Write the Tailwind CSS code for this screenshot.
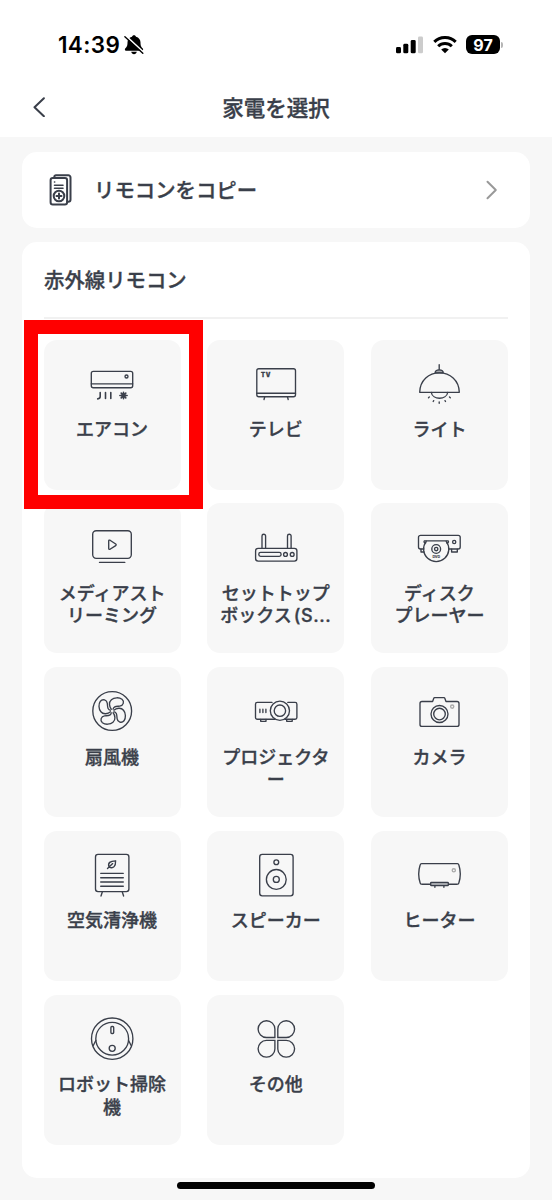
<!DOCTYPE html>
<html lang="ja">
<head>
<meta charset="utf-8">
<meta name="viewport" content="width=device-width, initial-scale=1">
<title>家電を選択</title>
<script src="https://cdn.jsdelivr.net/npm/@tailwindcss/browser@4"></script>
</head>
<body class="bg-[#f7f7f7]">
<div class="relative w-[552px] h-[1200px] overflow-hidden bg-[#f7f7f7] text-[#3a3f4a] font-['Inter','Noto_Sans_CJK_JP',sans-serif] font-medium">

  <header class="h-[137px] bg-white">
    <!-- status bar -->
    <div class="flex h-[76px] items-center justify-between pt-[13px] pl-[58px] pr-[49px] text-black">
      <div class="flex items-center gap-[4px]">
        <span class="w-[62px] text-[22.5px] leading-6 font-semibold tracking-[0.35px] whitespace-nowrap">14:39</span>
        <svg class="size-5" viewBox="0 0 20 20" fill="none">
          <path d="M10 .3c1.100 0 1.800.7 2 1.500 2.900.8 4.500 3.100 4.500 5.700 0 3.800.9 4.500 2.300 6.100.7.900.3 2.100-.8 2.100H2c-1.100 0-1.500-1.200-.8-2.100 1.400-1.600 2.300-2.300 2.300-6.100C3.500 4.900 5.100 2.600 8 1.800 8.200 1 8.900.3 10 .3Z" fill="#000"/>
          <path d="M7.200 16.800h5.600c-.3 1.500-1.400 2.400-2.800 2.400s-2.500-.9-2.800-2.400Z" fill="#000"/>
          <path d="M1.600.7 19.600 17.300" stroke="#fff" stroke-width="1.800"/>
          <path d="M.9 1.700 18.800 18.300" stroke="#000" stroke-width="1.400" stroke-linecap="round"/>
        </svg>
      </div>
      <div class="flex items-center">
        <svg class="w-[28px] h-[18px]" viewBox="0 0 28 18">
          <rect x="0" y="11" width="5" height="6.300" rx="1.400"/><rect x="7.300" y="7.800" width="5" height="9.500" rx="1.400"/><rect x="14.700" y="4" width="5" height="13.300" rx="1.400"/><rect x="22" y=".5" width="5" height="16.800" rx="1.400" fill="#ccc"/>
        </svg>
        <svg class="ml-[9px] w-6 h-[18px]" viewBox="0 0 24 18" fill="none" stroke="#000" stroke-width="3">
          <path d="M1.300 5.900a15.200 15.200 0 0 1 21.400 0"/><path d="M5.200 10.200a9.700 9.700 0 0 1 13.600 0"/><path d="M12 17.300 8.200 13.500a5.400 5.400 0 0 1 7.600 0Z" fill="#000" stroke="none"/>
        </svg>
        <span class="ml-[9px] flex h-[19px] w-[34px] items-center justify-center rounded-[6px] bg-black text-[16px] font-bold leading-none text-white">97</span>
        <span class="ml-[1px] h-[6px] w-[2px] rounded-r-full bg-[#b5b5b5]"></span>
      </div>
    </div>
    <!-- title bar -->
    <div class="grid h-[61px] grid-cols-[72px_1fr_72px] items-center">
      <svg class="ml-[32px] h-5 w-3.5" viewBox="0 0 14 20" fill="none" stroke="#3a3f4a" stroke-width="2" stroke-linecap="round" stroke-linejoin="round"><path d="M11.900 1.200 2.500 10.300l9.400 9"/></svg>
      <h1 class="pt-[2px] text-center text-[21.500px] leading-8 [-webkit-text-stroke:0.35px_#3a3f4a]">家電を選択</h1>
    </div>
  </header>

  <main class="px-[22px] pt-[15px]">
    <a class="flex h-[76px] items-center rounded-[15px] bg-white pl-[27px] pr-[32px]">
      <svg class="h-8 w-6" viewBox="0 0 24 32" fill="none" stroke="#3a3f4a" stroke-width="2" stroke-linecap="round" stroke-linejoin="round">
        <path d="M5.300 3.500V3A1.700 1.700 0 0 1 7 1.300h12.300A2.200 2.200 0 0 1 21.500 3.500v22a2.200 2.200 0 0 1-2.200 2.200h-1"/>
        <rect x="1.600" y="4" width="16.500" height="26.500" rx="2.200"/>
        <path d="M5.500 8h.2M5.500 11.300h8.500M5.500 14.300h8.500" stroke-width="1.600"/>
        <circle cx="10" cy="22" r="5.300"/><path d="M10 19.500v5M7.500 22h5"/>
      </svg>
      <span class="ml-[21px] pt-[2px] text-[20.400px] leading-8 [-webkit-text-stroke:0.35px_#3a3f4a]">リモコンをコピー</span>
      <svg class="ml-auto h-5 w-3" viewBox="0 0 12 20" fill="none" stroke="#999" stroke-width="2" stroke-linecap="round" stroke-linejoin="round"><path d="m1.500 1.800 8.300 8.200-8.300 8.200"/></svg>
    </a>

    <section class="mt-[14px] h-[936px] rounded-[15px] bg-white px-[22px]">
      <h2 class="flex h-[77px] items-center border-b-2 border-[#f1f1f1] pt-[3px] text-[20.400px] leading-8 [-webkit-text-stroke:0.35px_#3a3f4a]">赤外線リモコン</h2>
      <ul class="-ml-[0.400px] mt-[20.500px] grid grid-cols-[137px_137px_137px] justify-between gap-y-[13.800px] text-center text-[18px] leading-[22.600px] [&>li]:flex [&>li]:h-[150px] [&>li]:flex-col [&>li]:items-center [&>li]:rounded-[13px] [&>li]:bg-[#f7f7f7] [&>li]:pt-5 [&_svg]:mr-[0.600px] [&_svg]:size-12 [&_svg]:shrink-0 [&_svg]:fill-none [&_svg]:stroke-[#3a3f4a] [&_svg]:stroke-[1.350px] [&_p]:mt-[11.500px] [&_p]:whitespace-nowrap [&_p]:[-webkit-text-stroke:0.35px_#3a3f4a]">
        <li>
          <svg viewBox="0 0 48 48" stroke-linecap="round" stroke-linejoin="round"><rect x="3.300" y="11.300" width="41.400" height="16.400" rx="2"/><path d="M3.300 23.800h41.400"/><circle cx="38.500" cy="16.500" r="1.500"/><path class="stroke-[1.600px]" d="M12.200 32.600v4q0 2-2.500 2.300M17.500 32.600v5.800M22.800 32.600v5.800M35.500 32.300v6.400M31.900 35.500h7.200M33.200 33.100l4.600 4.800M37.800 33.100l-4.600 4.800"/></svg>
          <p>エアコン</p>
        </li>
        <li>
          <svg viewBox="0 0 48 48" stroke-linecap="round"><rect x="4.800" y="8.700" width="38.700" height="28" rx="2"/><path d="M4.800 33.200h38.700M12.700 37l-.7 2.500M35.500 37l.7 2.500"/><text x="9" y="16.900" font-size="5.800" font-weight="900" letter-spacing=".8" fill="#3a3f4a" stroke-width=".3" class="stroke-[0.300px]">TV</text></svg>
          <p>テレビ</p>
        </li>
        <li>
          <svg viewBox="0 0 48 48" stroke-linecap="round" stroke-linejoin="round"><path d="M24.200 4.700v5.100"/><path d="M20.200 12.800c0-4 8-4 8 0Z" fill="#a5a8ad"/><path d="M4.700 32.300C5 20 14 12.900 24.400 12.900S44 20 44.300 32.300Z"/><path d="M16.300 32.500c1.200 7.600 15.200 7.600 16.400 0"/><path d="m14.300 37-.8.700M18.700 40.600l-.5.900M24.200 42v1.200M30 40.600l.5.900M34.500 37l.8.700"/></svg>
          <p>ライト</p>
        </li>
        <li>
          <svg viewBox="0 0 48 48" stroke-linecap="round" stroke-linejoin="round"><rect x="4.700" y="7.700" width="38.600" height="27.600" rx="3.500"/><path d="M11.500 39.400h25.300M20.700 18v7.500c0 .8.700 1.100 1.300.8l5.700-3.700c.6-.4.600-1.200 0-1.600L22 17.200c-.6-.3-1.300 0-1.300.8Z"/></svg>
          <p>メディアスト<br>リーミング</p>
        </li>
        <li>
          <svg viewBox="0 0 48 48"><rect x="3.600" y="25.300" width="41.300" height="12.800" rx="2.500"/><rect x="6.800" y="29.400" width="22.300" height="4" rx="1.800"/><circle cx="33.500" cy="31.400" r="1.900"/><circle cx="40.200" cy="31.400" r="1.900"/><path d="M10 25.300V13a1.800 1.800 0 0 1 3.600 0v12.300M35.500 25.300V13a1.800 1.800 0 0 1 3.600 0v12.300"/></svg>
          <p>セットトップ<br>ボックス<span class="ml-[2px] tracking-[0.600px]">(S...</span></p>
        </li>
        <li>
          <svg viewBox="0 0 48 48" stroke-linecap="round" stroke-linejoin="round"><path d="M8.800 26H5.500a2 2 0 0 1-2-2V14.300a2 2 0 0 1 2-2h37.700a2 2 0 0 1 2 2V24a2 2 0 0 1-2 2h-9.300"/><path d="M10.800 19.800H9.500a1.300 1.300 0 0 1 0-2h23.500a1.300 1.300 0 0 1 0 2h-1.400"/><path d="M11.200 18.300a12.600 12.600 0 1 0 20 0"/><circle cx="21.200" cy="26" r="4.400"/><circle cx="21.200" cy="26" r="1.700"/><circle cx="39.200" cy="19" r="1.600"/><path d="M36.600 26.200V29h5.700v-2.800M6 26.200V29h3"/><text x="21.300" y="35.300" text-anchor="middle" font-size="3.600" font-weight="800" fill="#3a3f4a" stroke="none" class="stroke-[0.200px]">DVD</text></svg>
          <p>ディスク<br>プレーヤー</p>
        </li>
        <li>
          <svg viewBox="0 0 48 48" stroke-linejoin="round"><circle cx="24.200" cy="24" r="19.400"/><g transform="translate(24.200 24)"><path d="M-.6-1.300C-3.200-4.500-3.600-9-.8-11.300 2-13.700 7-13.800 9.800-11.800c2.700 2.300 1.400 6.500-2.200 6.900C4-4.500 1.500-5 .7-1.300"/><path transform="rotate(90)" d="M-.6-1.300C-3.200-4.500-3.600-9-.8-11.300 2-13.700 7-13.800 9.800-11.800c2.700 2.300 1.400 6.500-2.200 6.900C4-4.500 1.500-5 .7-1.300"/><path transform="rotate(180)" d="M-.6-1.300C-3.200-4.500-3.600-9-.8-11.300 2-13.700 7-13.800 9.800-11.800c2.700 2.300 1.400 6.500-2.200 6.900C4-4.500 1.500-5 .7-1.300"/><path transform="rotate(270)" d="M-.6-1.300C-3.200-4.500-3.600-9-.8-11.300 2-13.700 7-13.800 9.800-11.800c2.700 2.300 1.400 6.500-2.200 6.900C4-4.500 1.500-5 .7-1.300"/></g></svg>
          <p>扇風機</p>
        </li>
        <li>
          <svg viewBox="0 0 48 48" stroke-linecap="round" stroke-linejoin="round"><path d="M20 15.400H5.300a1.800 1.800 0 0 0-1.800 1.800v13.200a1.800 1.800 0 0 0 1.800 1.800h17.500M33 32.200h10.100a1.800 1.800 0 0 0 1.800-1.800V17.200a1.800 1.800 0 0 0-1.800-1.800h-7.300"/><circle cx="27.900" cy="23.700" r="9.600"/><circle cx="27.900" cy="23.700" r="5.700"/><path d="M7.900 22.200v3.300M10.900 22.200v3.300M13.900 22.200v3.300M8.700 32.500v1.800H14v-1.800M34.700 32.500v1.800h5.500v-1.800"/></svg>
          <p>プロジェクタ<br>ー</p>
        </li>
        <li>
          <svg viewBox="0 0 48 48" stroke-linejoin="round"><path d="M17.600 14.500H7a2 2 0 0 0-2 2v20.900a2 2 0 0 0 2 2h35a2 2 0 0 0 2-2V16.500a2 2 0 0 0-2-2H31l-1.200-3.300a.9.900 0 0 0-.9-.6h-9.200a.9.900 0 0 0-.9.600Z"/><circle cx="24.500" cy="27" r="8.500"/><circle cx="24.500" cy="27" r="5.800"/><circle cx="37.200" cy="19.600" r="1.600" class="stroke-[#aaa]"/></svg>
          <p>カメラ</p>
        </li>
        <li>
          <svg viewBox="0 0 48 48" stroke-linecap="round" stroke-linejoin="round"><rect x="7.500" y="3.400" width="33.400" height="37.200" rx="2.500"/><path d="m14.300 41-1.300 4M34.300 41l1.300 4M12.700 22.300h22.600M12.700 26.700h22.600M12.700 31h22.600M12.700 35.200h22.600"/><path d="M21 16.100c-1.500-4.300 1.200-6.200 6.600-6.300.2 5.300-2 8.200-6.600 6.300Zm-1.500 1.500 5.200-5"/></svg>
          <p>空気清浄機</p>
        </li>
        <li>
          <svg viewBox="0 0 48 48"><rect x="7.700" y="3.400" width="33.400" height="41.400" rx="2.500"/><circle cx="24.300" cy="11.200" r="2.400"/><circle cx="24.300" cy="28.400" r="9.900"/><circle cx="24.300" cy="28.400" r="3"/></svg>
          <p>スピーカー</p>
        </li>
        <li>
          <svg viewBox="0 0 48 48" stroke-linecap="round" stroke-linejoin="round"><path d="M15.600 33.200H6.600a1.500 1.500 0 0 1-1.400-1.100q-3-9.200 0-18.400a1.500 1.500 0 0 1 1.400-1.100h35.800a1.500 1.500 0 0 1 1.400 1.100q3 9.200 0 18.400a1.500 1.500 0 0 1-1.400 1.100h-9"/><rect x="15.700" y="31.500" width="17.600" height="3" rx=".6" fill="#c9cbce"/><path d="M19.900 34.700v1.500M28.900 34.700v1.500"/><circle cx="38.800" cy="19.300" r="1.600" class="stroke-[#aaa]"/></svg>
          <p>ヒーター</p>
        </li>
        <li>
          <svg viewBox="0 0 48 48" stroke-linecap="round"><circle cx="24.200" cy="23.700" r="20.700"/><circle cx="24.200" cy="23.700" r="16.400"/><path d="m7.800 25.500-2.500 5M40.600 25.500l2.500 5"/><rect x="22.900" y="11.500" width="2.800" height="7" rx="1"/><circle cx="24.200" cy="33.300" r="3"/></svg>
          <p>ロボット掃除<br>機</p>
        </li>
        <li>
          <svg viewBox="0 0 48 48"><path d="M22.900 22.500h-8.500a8.400 8.400 0 1 1 8.500-8.500ZM25.800 22.500h8.500a8.400 8.400 0 1 0-8.500-8.500ZM22.900 25.400h-8.500a8.400 8.400 0 1 0 8.500 8.500ZM25.800 25.400h8.500a8.400 8.400 0 1 1-8.500 8.500Z"/></svg>
          <p>その他</p>
        </li>
      </ul>
    </section>
  </main>

  <!-- home indicator -->
  <div class="mx-auto mt-[4px] h-[7px] w-[198px] rounded-full bg-black"></div>

  <!-- highlight around the air conditioner tile -->
  <div class="absolute left-[23.500px] top-[319.500px] h-[189px] w-[179px] border-[14px] border-[#ff0000]"></div>
</div>
</body>
</html>
